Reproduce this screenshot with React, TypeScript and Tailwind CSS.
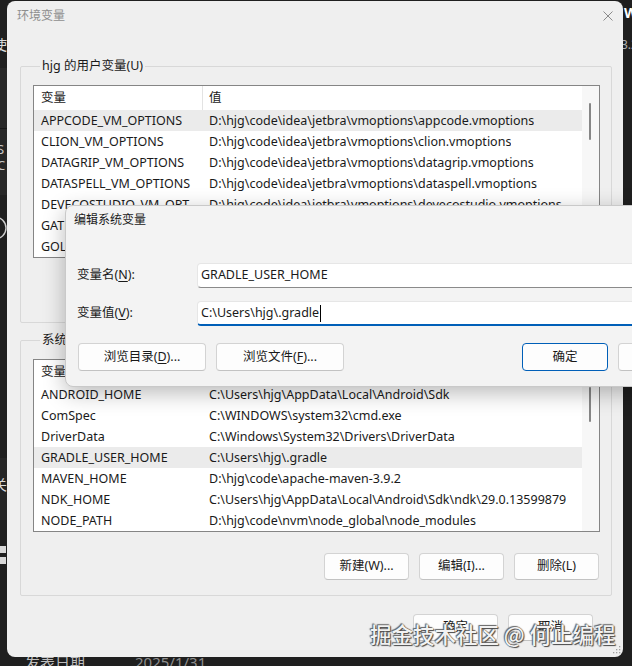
import React from 'react';

type Row = [string, string];

const userVars: Row[] = [
  ['APPCODE_VM_OPTIONS', 'D:\\hjg\\code\\idea\\jetbra\\vmoptions\\appcode.vmoptions'],
  ['CLION_VM_OPTIONS', 'D:\\hjg\\code\\idea\\jetbra\\vmoptions\\clion.vmoptions'],
  ['DATAGRIP_VM_OPTIONS', 'D:\\hjg\\code\\idea\\jetbra\\vmoptions\\datagrip.vmoptions'],
  ['DATASPELL_VM_OPTIONS', 'D:\\hjg\\code\\idea\\jetbra\\vmoptions\\dataspell.vmoptions'],
  ['DEVECOSTUDIO_VM_OPTIONS', 'D:\\hjg\\code\\idea\\jetbra\\vmoptions\\devecostudio.vmoptions'],
  ['GATEWAY_VM_OPTIONS', 'D:\\hjg\\code\\idea\\jetbra\\vmoptions\\gateway.vmoptions'],
  ['GOLAND_VM_OPTIONS', 'D:\\hjg\\code\\idea\\jetbra\\vmoptions\\goland.vmoptions'],
];

const systemVars: Row[] = [
  ['ANDROID_HOME', 'C:\\Users\\hjg\\AppData\\Local\\Android\\Sdk'],
  ['ComSpec', 'C:\\WINDOWS\\system32\\cmd.exe'],
  ['DriverData', 'C:\\Windows\\System32\\Drivers\\DriverData'],
  ['GRADLE_USER_HOME', 'C:\\Users\\hjg\\.gradle'],
  ['MAVEN_HOME', 'D:\\hjg\\code\\apache-maven-3.9.2'],
  ['NDK_HOME', 'C:\\Users\\hjg\\AppData\\Local\\Android\\Sdk\\ndk\\29.0.13599879'],
  ['NODE_PATH', 'D:\\hjg\\code\\nvm\\node_global\\node_modules'],
];

const Button = ({ children, className = '' }: { children: React.ReactNode; className?: string }) => (
  <div
    className={`flex shrink-0 items-center justify-center rounded-[4px] border border-[#d3d3d3] border-b-[#c2c2c2] bg-[#fdfdfd] text-[12.5px] ${className}`}
  >
    {children}
  </div>
);

const VarList = ({ rows, selected, thumb }: { rows: Row[]; selected: number; thumb: string }) => (
  <div className="flex h-[173px] overflow-hidden border border-[#858585] bg-white">
    <div className="flex min-w-0 flex-1 flex-col">
      <div className="flex h-[24px] shrink-0 items-center">
        <div className="flex h-full w-[169px] shrink-0 items-center border-r border-[#e3e3e3] pl-[7px]">变量</div>
        <div className="pl-[6px]">值</div>
      </div>
      {rows.map(([name, value], i) => (
        <div
          key={name}
          className={`flex h-[21px] shrink-0 items-center whitespace-nowrap pt-[2px] ${i === selected ? 'bg-[#ebebeb]' : ''}`}
        >
          <div className="w-[169px] shrink-0 overflow-hidden text-ellipsis pl-[7px] pr-px">{name}</div>
          <div className="overflow-hidden pl-[6px]">{value}</div>
        </div>
      ))}
    </div>
    <div className="relative w-[17px] shrink-0 bg-[#f7f7f7]">
      <div className={`absolute left-[7px] w-[2px] rounded-full bg-[#868686] ${thumb}`} />
    </div>
  </div>
);

const GroupBox = ({ label, children, className = '' }: { label: React.ReactNode; children: React.ReactNode; className?: string }) => (
  <fieldset className={`ml-[13px] w-[592px] rounded-[2px] border border-[#d8d8d8] pl-[12px] pr-[11px] pb-[15px] ${className}`}>
    <legend className="ml-[7px] px-[2px] leading-[16px]">{label}</legend>
    {children}
  </fieldset>
);

const MainDialog = () => (
  <div className="absolute left-[7px] top-[1px] flex h-[656px] w-[616px] flex-col rounded-[8px] bg-[#efefef]">
    <div className="flex h-[29px] shrink-0 items-center justify-between pl-[10px] pr-[10px]">
      <span className="text-[12px] text-[#8e8e8e]">环境变量</span>
      <svg width="10" height="10" viewBox="0 0 10 10" className="mt-[1px]">
        <path d="M0.5 0.5 L9.5 9.5 M9.5 0.5 L0.5 9.5" stroke="#8a8a8a" strokeWidth="1" />
      </svg>
    </div>

    <GroupBox label="hjg 的用户变量(U)" className="mt-[28px] pt-[11px]">
      <VarList rows={userVars} selected={0} thumb="top-[17px] h-[37px]" />
      <div className="mt-[22px] flex justify-end gap-[10px] pr-[1px]">
        <Button className="h-[27px] w-[85px]">新建(N)...</Button>
        <Button className="h-[27px] w-[85px]">编辑(E)...</Button>
        <Button className="h-[27px] w-[85px]">删除(D)</Button>
      </div>
    </GroupBox>

    <GroupBox label="系统变量(S)" className="mt-[9px] pt-[11px]">
      <VarList rows={systemVars} selected={3} thumb="top-[27px] h-[35px]" />
      <div className="mt-[21px] flex justify-end gap-[10px] pr-[1px]">
        <Button className="h-[27px] w-[85px]">新建(W)...</Button>
        <Button className="h-[27px] w-[85px]">编辑(I)...</Button>
        <Button className="h-[27px] w-[85px]">删除(L)</Button>
      </div>
    </GroupBox>

    <div className="mt-[18px] flex justify-end gap-[10px] pr-[30px]">
      <Button className="h-[27px] w-[85px]">确定</Button>
      <Button className="h-[27px] w-[85px]">取消</Button>
    </div>
  </div>
);

const EditDialog = () => (
  <div className="absolute left-[65px] top-[205px] flex h-[182px] w-[652px] flex-col rounded-l-[8px] border border-[#c9c9c9] bg-[#f3f3f3] shadow-[0_6px_22px_rgba(0,0,0,0.28)]">
    <div className="flex h-[28px] shrink-0 items-center pl-[8px] text-[12px] text-[#1a1a1a]">编辑系统变量</div>

    <div className="mt-[29px] flex h-[25px] items-center pl-[11px] pr-[12px]">
      <div className="w-[120px] shrink-0">
        变量名(<span className="underline underline-offset-2">N</span>):
      </div>
      <div className="flex h-full flex-1 items-center rounded-[4px] border border-[#e6e6e6] border-b-[#8a8a8a] bg-white pl-[3px]">
        GRADLE_USER_HOME
      </div>
    </div>

    <div className="mt-[13px] flex h-[25px] items-center pl-[11px] pr-[12px]">
      <div className="w-[120px] shrink-0">
        变量值(<span className="underline underline-offset-2">V</span>):
      </div>
      <div className="flex h-full flex-1 items-center rounded-[4px] border border-[#e6e6e6] border-b-2 border-b-[#005fb8] bg-white pl-[3px]">
        C:\Users\hjg\.gradle
        <span className="ml-px inline-block h-[17px] w-px bg-black" />
      </div>
    </div>

    <div className="mt-[17px] flex items-center gap-[10px] pl-[12px] pr-[12px]">
      <Button className="h-[28px] w-[128px]">
        浏览目录(<span className="underline underline-offset-2">D</span>)...
      </Button>
      <Button className="h-[28px] w-[128px]">
        浏览文件(<span className="underline underline-offset-2">F</span>)...
      </Button>
      <div className="flex-1" />
      <Button className="h-[28px] w-[86px] border-[1.5px] !border-[#005fb8]">确定</Button>
      <Button className="h-[28px] w-[86px]">取消</Button>
    </div>
  </div>
);

const Backdrop = () => (
  <div className="absolute inset-0">
    <div className="absolute left-0 top-[68px] h-[127px] w-[8px] bg-[#272727]" />
    <div className="absolute left-0 top-[128px] h-px w-[8px] bg-[#161616]" />
    <div className="absolute left-0 top-[458px] h-[62px] w-[8px] bg-[#262626]" />
    <span className="absolute left-[-7px] top-[36px] text-[14px] leading-[18px] text-[#dcdcdc]">使</span>
    <span className="absolute left-[-3px] top-[141px] text-[13px] leading-[17px] text-[#c8c8c8]">S</span>
    <span className="absolute left-[-3px] top-[157px] text-[13px] leading-[17px] text-[#c8c8c8]">C</span>
    <svg className="absolute left-0 top-[214px]" width="8" height="28" viewBox="0 0 8 28">
      <circle cx="-5" cy="14" r="11" fill="none" stroke="#cfcfcf" strokeWidth="1.4" />
    </svg>
    <span className="absolute left-[-7px] top-[476px] text-[14px] leading-[18px] text-[#dcdcdc]">关</span>
    <div className="absolute left-0 top-[546px] h-[7px] w-[6px] bg-[#d8d8d8]" />
    <div className="absolute left-0 top-[557px] h-[7px] w-[6px] bg-[#d8d8d8]" />
    <span className="absolute left-[624px] top-[4px] text-[14px] font-bold leading-[18px] text-white">W</span>
    <span className="absolute left-[621px] top-[37px] text-[12px] leading-[16px] text-[#b0b0b0]">3.2</span>
    <span className="absolute left-[25px] top-[652px] text-[15px] leading-[20px] text-[#bdbdbd]">发表日期</span>
    <span className="absolute left-[135px] top-[652px] text-[15px] leading-[20px] text-[#8d8d8d]">2025/1/31</span>
  </div>
);

export default function App() {
  return (
    <div className="relative h-[666px] w-[632px] overflow-hidden bg-[#1f1f1f] font-['Noto_Sans','Noto_Sans_CJK_SC',sans-serif] text-[12.5px] text-[#1a1a1a]">
      <Backdrop />
      <MainDialog />
      <EditDialog />
      <svg className="absolute left-[612px] top-[645px]" width="9" height="9" viewBox="0 0 9 9">
        <g fill="#a0a0a0">
          <rect x="7" y="1" width="1.3" height="1.3" />
          <rect x="4" y="4" width="1.3" height="1.3" />
          <rect x="7" y="4" width="1.3" height="1.3" />
          <rect x="1" y="7" width="1.3" height="1.3" />
          <rect x="4" y="7" width="1.3" height="1.3" />
          <rect x="7" y="7" width="1.3" height="1.3" />
        </g>
      </svg>
      <div className="absolute left-[370px] top-[619px] whitespace-nowrap font-['Noto_Sans_CJK_SC',sans-serif] text-[21.5px] font-medium leading-[30px] text-[#f2f2f2] [text-shadow:0_0_1px_#3a3a3a,1px_1px_1px_#4a4a4a,-1px_-1px_1px_#6a6a6a]">
        掘金技术社区 @ 何止编程
      </div>
    </div>
  );
}
